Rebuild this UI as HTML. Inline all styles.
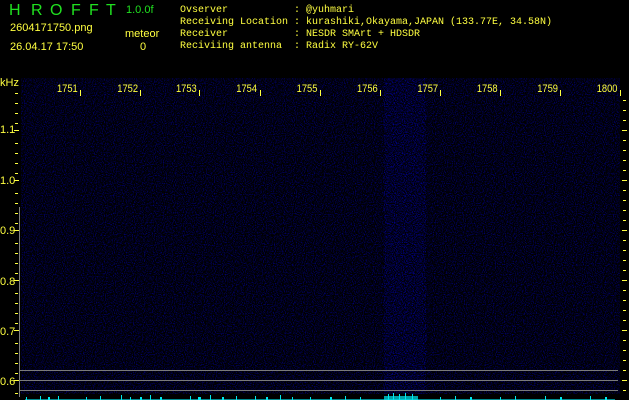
<!DOCTYPE html>
<html><head><meta charset="utf-8"><style>
html,body{margin:0;padding:0;background:#000;}
svg{display:block}
text{font-family:"Liberation Sans",sans-serif;}
.m{font-family:"Liberation Mono",monospace;font-size:10px;fill:#ffff40;white-space:pre;}
</style></head><body>
<svg width="629" height="400" viewBox="0 0 629 400" xmlns="http://www.w3.org/2000/svg">
<defs>
<filter id="n" x="0" y="0" width="100%" height="100%" color-interpolation-filters="sRGB">
<feTurbulence type="fractalNoise" baseFrequency="0.9" numOctaves="1" seed="3"/>
<feColorMatrix values="0 0 0 0 0  0 0 0 0 0  1.5 0 0 0 -0.68  0 0 0 0 1"/>
</filter>
<filter id="n2" x="0" y="0" width="100%" height="100%" color-interpolation-filters="sRGB">
<feTurbulence type="fractalNoise" baseFrequency="0.9" numOctaves="1" seed="7"/>
<feColorMatrix values="0 0 0 0 0  0 0 0 0 0  1.8 0 0 0 -0.75  0 0 0 0 1"/>
</filter>
</defs>
<rect width="629" height="400" fill="#000"/>
<rect x="21" y="78" width="599" height="316" fill="#00001a" filter="url(#n)"/>
<rect x="384" y="78" width="42" height="316" filter="url(#n2)"/>
<g fill="#20e020" font-size="16">
<text x="9" y="15">H</text><text x="31" y="15">R</text><text x="50" y="15">O</text><text x="71" y="15">F</text><text x="89" y="15">F</text><text x="106" y="15">T</text>
</g>
<text x="126" y="13" fill="#20e020" font-size="11">1.0.0f</text>
<g fill="#ffff40" font-size="11">
<text x="10" y="31">2604171750.png</text>
<text x="10" y="50">26.04.17 17:50</text>
<text x="125" y="37">meteor</text>
<text x="140" y="50">0</text>
</g>
<text class="m" x="180" y="12" xml:space="preserve">Ovserver           : @yuhmari</text>
<text class="m" x="180" y="24" xml:space="preserve">Receiving Location : kurashiki,Okayama,JAPAN (133.77E, 34.58N)</text>
<text class="m" x="180" y="36" xml:space="preserve">Receiver           : NESDR SMArt + HDSDR</text>
<text class="m" x="180" y="48" xml:space="preserve">Reciviing antenna  : Radix RY-62V</text>
<text x="0" y="86" fill="#ffff40" font-size="11">kHz</text>
<g fill="#ffff40" font-size="11">
<g transform="scale(0.85,1)">
<text x="67" y="92">1751</text><text x="138" y="92">1752</text><text x="207" y="92">1753</text><text x="278" y="92">1754</text><text x="349" y="92">1755</text><text x="420" y="92">1756</text><text x="491" y="92">1757</text><text x="561" y="92">1758</text><text x="632" y="92">1759</text><text x="702" y="92">1800</text>
</g>
<text x="0" y="133">1.1</text><text x="0" y="184">1.0</text><text x="0" y="234">0.9</text><text x="0" y="285">0.8</text><text x="0" y="335">0.7</text><text x="0" y="385">0.6</text>
</g>
<g stroke="#ffff40" stroke-width="1">
<path d="M80.5 90v6M140.5 90v6M199.5 90v6M260.5 90v6M320.5 90v6M380.5 90v6M440.5 90v6M500.5 90v6M560.5 90v6M620.5 90v6"/>
<path d="M15 93.5h3M15 103.5h3M15 113.5h3M15 123.5h3M15 143.5h3M15 153.5h3M15 163.5h3M15 173.5h3M15 193.5h3M15 203.5h3M15 213.5h3M15 223.5h3M15 243.5h3M15 253.5h3M15 263.5h3M15 273.5h3M15 293.5h3M15 303.5h3M15 313.5h3M15 323.5h3M15 343.5h3M15 353.5h3M15 363.5h3M15 373.5h3M15 393.5h3"/>
<path d="M14 130.5h5M14 180.5h5M14 230.5h5M14 280.5h5M14 330.5h5M14 380.5h5"/>
<path d="M623 100.5h3M623 110.5h3M623 120.5h3M623 140.5h3M623 150.5h3M623 160.5h3M623 170.5h3M623 190.5h3M623 200.5h3M623 210.5h3M623 220.5h3M623 240.5h3M623 250.5h3M623 260.5h3M623 270.5h3M623 290.5h3M623 300.5h3M623 310.5h3M623 320.5h3M623 340.5h3M623 350.5h3M623 360.5h3M623 370.5h3M623 390.5h3"/>
<path d="M622 130.5h5M622 180.5h5M622 230.5h5M622 280.5h5M622 330.5h5M622 380.5h5"/>
</g>
<path d="M19.5 207v190" stroke="#808080"/>
<g stroke="#7a7a7a" stroke-width="1"><path d="M20 370.5h598M20 380.5h598M20 390.5h598"/></g>
<g fill="#00e8f0">
<rect x="25" y="399" width="590" height="1" opacity="0.6"/>
<rect x="26" y="397" width="1" height="3"/><rect x="40" y="396" width="1" height="4"/><rect x="48" y="397" width="2" height="3"/><rect x="58" y="396" width="1" height="4"/>
<rect x="86" y="397" width="1" height="3"/><rect x="100" y="396" width="1" height="4"/><rect x="121" y="395" width="1" height="5"/>
<rect x="130" y="397" width="1" height="3"/><rect x="140" y="397" width="2" height="3"/><rect x="150" y="395" width="1" height="5"/><rect x="160" y="397" width="2" height="3"/>
<rect x="190" y="396" width="1" height="4"/><rect x="198" y="397" width="3" height="3"/><rect x="210" y="395" width="1" height="5"/><rect x="222" y="397" width="2" height="3"/><rect x="236" y="396" width="1" height="4"/>
<rect x="255" y="396" width="1" height="4"/><rect x="266" y="397" width="2" height="3"/><rect x="280" y="395" width="1" height="5"/><rect x="292" y="397" width="1" height="3"/>
<rect x="310" y="397" width="1" height="3"/><rect x="330" y="397" width="2" height="3"/><rect x="345" y="396" width="1" height="4"/><rect x="360" y="397" width="1" height="3"/>
<rect x="384" y="396" width="34" height="4" opacity="0.7"/><rect x="388" y="394" width="1" height="6"/><rect x="393" y="393" width="1" height="7"/><rect x="399" y="394" width="1" height="6"/><rect x="405" y="393" width="1" height="7"/><rect x="412" y="394" width="1" height="6"/>
<rect x="440" y="397" width="1" height="3"/><rect x="455" y="396" width="1" height="4"/><rect x="470" y="397" width="2" height="3"/><rect x="500" y="397" width="1" height="3"/><rect x="515" y="396" width="1" height="4"/>
<rect x="545" y="396" width="1" height="4"/><rect x="560" y="397" width="2" height="3"/><rect x="590" y="396" width="1" height="4"/><rect x="605" y="397" width="2" height="3"/>
</g>
</svg>
</body></html>
